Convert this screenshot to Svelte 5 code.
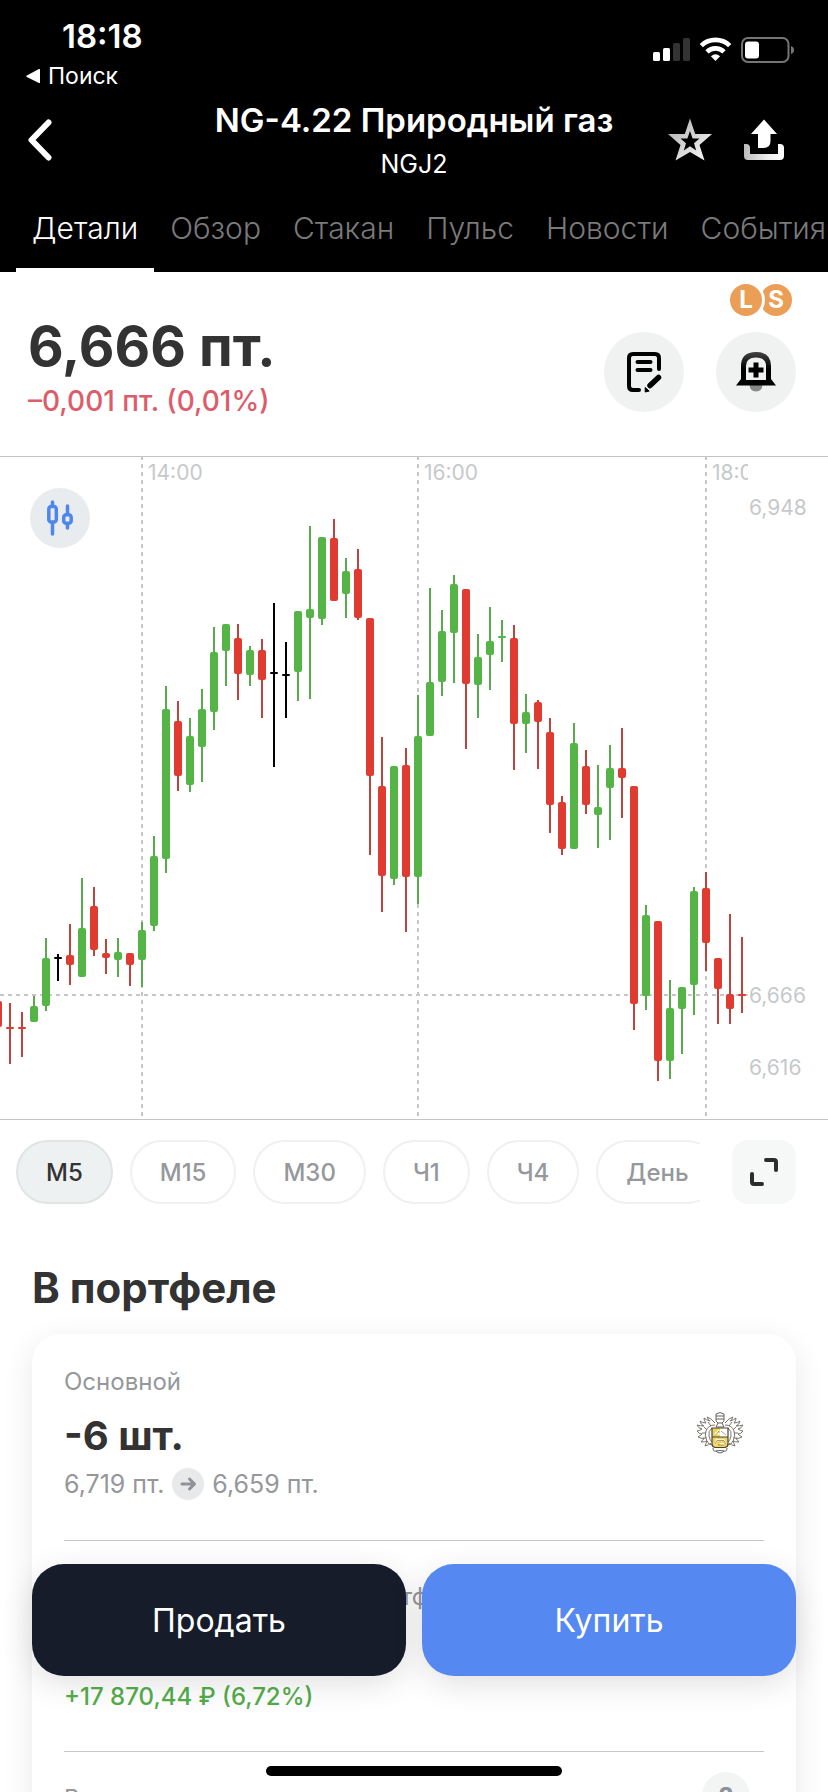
<script>
  let activeTab = "Детали";
  let activeFrame = "М5";

  const tabs = ["Детали", "Обзор", "Стакан", "Пульс", "Новости", "События"];
  const frames = ["М5", "М15", "М30", "Ч1", "Ч4", "День"];

  const timeMarks = [
    { x: 142, label: "14:00" },
    { x: 418, label: "16:00" },
    { x: 706, label: "18:00" }
  ];
  const priceMarks = [
    { y: 515, label: "6,948" },
    { y: 1003, label: "6,666" },
    { y: 1075, label: "6,616" }
  ];

  // kind, high, body top, body bottom, low
  const raw = [
    ["down", 1001, 1001, 1027, 1027], ["down", 1003, 1027, 1029, 1064], ["down", 1012, 1027, 1029, 1057],
    ["up", 996, 1006, 1022, 1022], ["up", 938, 958, 1006, 1011], ["flat", 954, 957, 959, 981],
    ["down", 924, 955, 965, 985], ["up", 878, 928, 977, 977], ["down", 887, 906, 950, 956],
    ["down", 939, 953, 958, 974], ["up", 938, 952, 960, 977], ["down", 953, 953, 965, 986],
    ["up", 922, 930, 960, 987], ["up", 836, 856, 926, 931], ["up", 686, 709, 859, 873],
    ["down", 701, 721, 776, 791], ["up", 718, 736, 785, 792], ["up", 689, 709, 747, 782],
    ["up", 627, 652, 712, 730], ["up", 624, 624, 651, 686], ["down", 624, 638, 674, 700],
    ["up", 646, 650, 675, 686], ["down", 639, 650, 680, 718], ["flat", 603, 672, 674, 767],
    ["flat", 642, 674, 676, 718], ["up", 611, 611, 672, 701], ["up", 526, 609, 618, 699],
    ["up", 537, 537, 619, 625], ["down", 519, 538, 601, 601], ["up", 558, 571, 594, 618],
    ["down", 549, 569, 618, 620], ["down", 618, 618, 776, 855], ["down", 737, 786, 876, 912],
    ["up", 766, 766, 879, 885], ["down", 748, 765, 877, 932], ["up", 695, 736, 877, 904],
    ["up", 588, 682, 736, 736], ["up", 610, 631, 682, 696], ["up", 575, 584, 633, 683],
    ["down", 589, 589, 684, 749], ["up", 634, 657, 685, 718], ["up", 607, 641, 655, 690],
    ["up", 620, 636, 638, 662], ["down", 625, 638, 724, 770], ["up", 694, 712, 724, 753],
    ["down", 700, 702, 722, 769], ["down", 718, 732, 805, 833], ["down", 796, 802, 849, 855],
    ["up", 723, 743, 849, 849], ["down", 750, 766, 805, 814], ["up", 765, 807, 815, 848],
    ["up", 745, 768, 788, 840], ["down", 728, 768, 778, 818], ["down", 786, 786, 1004, 1030],
    ["up", 905, 915, 996, 1010], ["down", 921, 921, 1061, 1081], ["up", 980, 1008, 1061, 1079],
    ["up", 987, 987, 1009, 1054], ["up", 887, 891, 985, 1015], ["down", 872, 888, 943, 971],
    ["down", 958, 958, 989, 1024], ["down", 914, 994, 1009, 1024], ["down", 937, 994, 996, 1013]
  ];
  const candles = raw.map(([kind, high, top, bottom, low], i) => ({
    x: i * 12 - 2, kind, high, top, bottom, low
  }));
</script>

<div class="screen">
  <header class="header">
    <div class="status">
      <div>
        <div class="clock">18:18</div>
        <a class="return" href="#search">
          <svg width="14" height="16" viewBox="0 0 14 16" aria-hidden="true"><path d="M14 1.5v13q0 .8-1 .5L.8 9q-1-.8 0-1.500L13 1q1-.3 1 .5z" fill="#fff" /></svg>
          Поиск
        </a>
      </div>
      <svg class="indicators" width="142" height="26" viewBox="0 0 142 26" aria-hidden="true">
        <g fill="#fff">
          <rect x="0" y="15" width="7" height="9" rx="1.500" />
          <rect x="10" y="11" width="7" height="13" rx="1.500" />
        </g>
        <g fill="#333">
          <rect x="20" y="6" width="7" height="18" rx="1.500" />
          <rect x="30" y="1" width="7" height="23" rx="1.500" />
        </g>
        <g fill="none" stroke="#fff" stroke-width="4.600">
          <path d="M48.300 8.600a20.500 20.500 0 0 1 28.400 0" />
          <path d="M54 14.800a12.300 12.300 0 0 1 17 0" />
        </g>
        <path d="M62.500 24l-4.600-4.800q4.600-3.700 9.200 0z" fill="#fff" />
        <rect x="89" y="1" width="46.500" height="24" rx="6" fill="none" stroke="#757575" stroke-width="2" />
        <rect x="92" y="4.500" width="14" height="17" rx="3" fill="#fff" />
        <path d="M138 9q3 1 3 4t-3 4z" fill="#757575" />
      </svg>
    </div>

    <div class="nav">
      <button class="icon-btn" aria-label="Назад">
        <svg width="26" height="42" viewBox="0 0 26 42"><path d="M20.500 3.500L3.500 21l17 17.500" fill="none" stroke="#fff" stroke-width="6" stroke-linecap="round" stroke-linejoin="round" /></svg>
      </button>
      <div class="heading">
        <h1>NG-4.22 Природный газ</h1>
        <p>NGJ2</p>
      </div>
      <div class="nav-actions">
        <button class="icon-btn" aria-label="В избранное">
          <svg width="44" height="44" viewBox="0 0 44 44">
            <defs><linearGradient id="starFill" x1="0" y1="0" x2="1" y2="1"><stop offset="0" stop-color="#aaa" /><stop offset=".6" stop-color="#ddd" /><stop offset="1" stop-color="#fff" /></linearGradient></defs>
            <path fill="url(#starFill)" fill-rule="evenodd" d="M22 .5l5.200 15.500H44L31.500 27l5 15.500L22 34 7.500 42.500l5-15.500L0 16h16.800zM22 13l-2.600 7.600H12.500l5.500 4.600-2.200 7.300L22 28.300l6.200 4.200-2.200-7.300 5.500-4.600h-6.900z" />
          </svg>
        </button>
        <button class="icon-btn" aria-label="Поделиться">
          <svg width="40" height="42" viewBox="0 0 40 42">
            <defs><linearGradient id="trayFill"><stop offset="0" stop-color="#bbb" /><stop offset=".6" stop-color="#eee" /><stop offset="1" stop-color="#fff" /></linearGradient></defs>
            <path d="M20 .5l13 14.500h-6.500v7q0 7-7 7h-5.500V15H7z" fill="#fff" />
            <path d="M0 25h2q4 0 4 4v6h28V25h2q4 0 4 4v8q0 4-4 4H4q-4 0-4-4z" fill="url(#trayFill)" />
          </svg>
        </button>
      </div>
    </div>

    <nav class="tabs">
      {#each tabs as tab}
        <button class="tab" class:active={tab === activeTab} on:click={() => (activeTab = tab)}>{tab}</button>
      {/each}
    </nav>
  </header>

  <section class="summary">
    <div class="quote">
      <div class="price">6,666 пт.</div>
      <div class="change">–0,001 пт. (0,01%)</div>
    </div>
    <div class="summary-side">
      <div class="badges"><span class="badge long">L</span><span class="badge">S</span></div>
      <div class="round-actions">
        <button class="round" aria-label="Заметка">
          <svg width="36" height="42" viewBox="-1 -1 36 42">
            <g fill="none" stroke="#000" stroke-width="4" stroke-linecap="round">
              <path d="M32 17V6q0-4-4-4H6Q2 2 2 6v28q0 4 4 4h6" />
              <path d="M10.500 10h13M10.500 18h13" />
            </g>
            <path d="M23 33.500l8.500-8" stroke="#000" stroke-width="5.500" stroke-linecap="round" />
            <path d="M18.200 40v-4.500l4 3.500z" fill="#000" stroke="#000" />
          </svg>
        </button>
        <button class="round" aria-label="Добавить уведомление">
          <svg width="40" height="40" viewBox="0 0 40 40">
            <defs><linearGradient id="bellFill" x1="0" y1="0" x2="0" y2="1"><stop offset="0" stop-color="#444" /><stop offset=".5" stop-color="#000" /></linearGradient></defs>
            <path d="M13.500 33h13q-.5 6.500-6.500 6.500T13.500 33z" fill="#888" />
            <path fill="url(#bellFill)" fill-rule="evenodd" d="M5 14Q5 0 20 0t15 14v13l5 6.500H0L5 27zM10 28h20V14q0-8.500-10-8.500T10 14z" />
            <path d="M20 10.500v15M12.500 18h15" stroke="#000" stroke-width="5" />
          </svg>
        </button>
      </div>
    </div>
  </section>

  <section class="chart">
    <svg class="plot" viewBox="0 456 828 664" role="img" aria-label="График цены">
      <defs><clipPath id="plotArea"><rect x="0" y="456" width="748" height="664" /></clipPath></defs>
      <path class="edge" d="M0 456.500H828M0 1119.500H828" />
      {#each timeMarks as mark}
        <line class="grid" x1={mark.x} x2={mark.x} y1="456" y2="1116" />
        <text class="mark" x={mark.x + 6} y="480" clip-path="url(#plotArea)">{mark.label}</text>
      {/each}
      <line class="grid" x1="0" x2="748" y1="995" y2="995" />
      {#each candles as c}
        <g class={c.kind}>
          <line x1={c.x} x2={c.x} y1={c.high} y2={c.low} />
          <rect x={c.x - 4} y={c.top} width="8" height={c.bottom - c.top} rx={c.bottom - c.top > 4 ? 2 : 1} />
        </g>
      {/each}
      {#each priceMarks as mark}
        <text class="mark" x="749" y={mark.y}>{mark.label}</text>
      {/each}
    </svg>
    <button class="chart-type" aria-label="Тип графика">
      <svg width="26" height="36" viewBox="0 0 26 36" fill="none" stroke="#4f86ec" stroke-width="3.500" stroke-linecap="round">
        <rect x="1.800" y="6.500" width="7.500" height="15.500" rx="2.500" />
        <path d="M5.500 2v4M5.500 23v11" />
        <rect x="16.700" y="14.700" width="7.500" height="8.500" rx="2.500" />
        <path d="M20.500 6v8M20.500 24v4" />
      </svg>
    </button>
  </section>

  <div class="frames-row">
    <div class="frames">
      {#each frames as frame}
        <button class="frame" class:active={frame === activeFrame} on:click={() => (activeFrame = frame)}>{frame}</button>
      {/each}
    </div>
    <button class="expand" aria-label="На весь экран">
      <svg width="28" height="28" viewBox="0 0 28 28" fill="none" stroke="#2b2d2e" stroke-width="4" stroke-linecap="round">
        <path d="M16 2h8q2 0 2 2v8M2 16v8q0 2 2 2h8" />
      </svg>
    </button>
  </div>

  <h2>В портфеле</h2>

  <div class="card">
    <div class="row position">
      <div>
        <div class="label">Основной</div>
        <div class="amount">-6 шт.</div>
        <div class="prices">
          <span>6,719 пт.</span>
          <svg width="32" height="32" viewBox="0 0 32 32" aria-hidden="true">
            <circle cx="16" cy="16" r="16" fill="#e7e9eb" />
            <path d="M10 16h12M17.500 11l5 5-5 5" fill="none" stroke="#8f9296" stroke-width="3" stroke-linecap="round" stroke-linejoin="round" />
          </svg>
          <span>6,659 пт.</span>
        </div>
      </div>
      <svg class="emblem" width="48" height="44" viewBox="0 0 48 44" aria-hidden="true">
        <g fill="none" stroke="#6b6860" stroke-width=".9" stroke-linejoin="round">
          <path d="M19 12q-4-5-8-6 1 3 3 4-4-1-6-3 0 3 2 5-4 0-6-2 1 4 4 5-4 0-7-1 2 4 5 4-3 2-5 2 2 3 5 3-2 2-4 3 3 2 6 1-1 2-3 4 4 0 6-1-1 3-2 5 4-1 6-3" />
          <path d="M19 14q-7 0-9 6t1 10q2 4 5 4M16 17q-4 3-3 8t3 6M8 16l3 3M6 22h4M7 28l4-2M12 11l3 4" />
        </g>
        <g fill="none" stroke="#6b6860" stroke-width=".9" stroke-linejoin="round" transform="translate(48 0) scale(-1 1)">
          <path d="M19 12q-4-5-8-6 1 3 3 4-4-1-6-3 0 3 2 5-4 0-6-2 1 4 4 5-4 0-7-1 2 4 5 4-3 2-5 2 2 3 5 3-2 2-4 3 3 2 6 1-1 2-3 4 4 0 6-1-1 3-2 5 4-1 6-3" />
          <path d="M19 14q-7 0-9 6t1 10q2 4 5 4M16 17q-4 3-3 8t3 6M8 16l3 3M6 22h4M7 28l4-2M12 11l3 4" />
        </g>
        <path d="M20 3q4-3 8 0v7l-2 2 2 4h-8l2-4-2-2zM20 5h8M20 8h8M22 12h4M17 37q0 4 3 3 4 4 8 0 3 1 3-3M20 40q4-1 8 0" fill="#fff" stroke="#55524b" stroke-width=".9" />
        <path d="M16 17h16v16q0 3-3 3.500H19q-3-.5-3-3.500z" fill="#f1d35a" />
        <path d="M24 17h8v9h-8z" fill="#fff" />
        <path d="M16 17h16v16q0 3-3 3.500H19q-3-.5-3-3.500zM16 26h16" fill="none" stroke="#4a4435" stroke-width="1.200" />
        <path d="M19 24l4-5M19 22l5 1M19 34l2-5h7l2 4M20 28l2 2M24 33h4" fill="none" stroke="#fff" stroke-width="1.500" />
        <path d="M19 24.500l4-4.500M25 20l5 4M19 33.500l2-4h7l2 4M22 34h6" fill="none" stroke="#6d6341" stroke-width=".6" />
      </svg>
    </div>
    <div class="row income">
      <div class="label">Прибыль за все время в портфеле</div>
      <div class="profit">+17 870,44 ₽ (6,72%)</div>
    </div>
    <div class="row margin">
      <div class="label">Вариационная маржа</div>
      <button class="help" aria-label="Подсказка">?</button>
    </div>
  </div>

  <div class="actions">
    <button class="sell">Продать</button>
    <button class="buy">Купить</button>
  </div>
  <div class="home"></div>
</div>

<style>
  :global(body) {
    margin: 0;
    background: #fff;
  }

  .screen {
    position: relative;
    height: 100vh;
    overflow: hidden;
    font-family: Inter, "Liberation Sans", sans-serif;
    color: #333;
  }
  button {
    font: inherit;
    margin: 0;
    padding: 0;
    border: none;
    background: none;
    color: inherit;
    cursor: pointer;
  }
  svg {
    display: block;
    flex-shrink: 0;
  }

  /* Header */
  .header {
    background: #000;
    color: #fff;
  }
  .status {
    display: flex;
    justify-content: space-between;
    padding: 16px 33px 0 26px;
  }
  .clock {
    padding-left: 36px;
    font-size: 33px;
    line-height: 40px;
    font-weight: 600;
  }
  .return {
    display: flex;
    align-items: center;
    gap: 8px;
    margin-top: 8px;
    font-size: 23px;
    line-height: 24px;
    color: #fff;
    text-decoration: none;
  }
  .indicators {
    margin-top: 21px;
  }
  .nav {
    display: grid;
    grid-template-columns: 1fr auto 1fr;
    align-items: center;
    padding: 12px 28px 0;
  }
  .icon-btn {
    justify-self: start;
  }
  .heading {
    text-align: center;
  }
  h1 {
    margin: 0;
    font-size: 33px;
    line-height: 40px;
    font-weight: 600;
  }
  .heading p {
    margin: 8px 0 0;
    font-size: 25px;
    line-height: 32px;
  }
  .nav-actions {
    display: flex;
    justify-content: flex-end;
    gap: 32px;
    padding-right: 16px;
  }
  .tabs {
    display: flex;
    padding-left: 16px;
    overflow: hidden;
  }
  .tab {
    flex-shrink: 0;
    padding: 30px 16px 22px;
    border-bottom: 4px solid transparent;
    font-size: 30px;
    line-height: 36px;
    font-weight: 300;
    color: #7a7a7a;
  }
  .tab.active {
    color: #fff;
    border-color: #fff;
  }

  /* Quote */
  .summary {
    display: flex;
    justify-content: space-between;
    padding: 12px 32px 38px 28px;
  }
  .quote {
    padding-top: 30px;
  }
  .price {
    font-size: 55px;
    line-height: 64px;
    font-weight: 700;
  }
  .change {
    margin-top: 6px;
    font-size: 28px;
    line-height: 34px;
    font-weight: 500;
    color: #de5c69;
  }
  .summary-side {
    display: flex;
    flex-direction: column;
    align-items: flex-end;
    gap: 16px;
  }
  .badges {
    display: flex;
    padding-right: 4px;
  }
  .badge {
    width: 32px;
    height: 32px;
    border-radius: 50%;
    background: #eb9f56;
    color: #fff;
    font-size: 24px;
    line-height: 32px;
    font-weight: 700;
    text-align: center;
  }
  .badge.long {
    position: relative;
    margin-right: -2px;
    box-shadow: 0 0 0 3px #fff;
  }
  .round-actions {
    display: flex;
    gap: 32px;
  }
  .round {
    display: grid;
    place-items: center;
    width: 80px;
    height: 80px;
    border-radius: 50%;
    background: #f0f2f2;
  }

  /* Chart */
  .chart {
    position: relative;
  }
  .plot {
    width: 100%;
    height: auto;
  }
  .edge {
    stroke: #c4c4c4;
  }
  .grid {
    stroke: #c6c6c6;
    stroke-width: 2;
    stroke-dasharray: 4 4;
  }
  .mark {
    font-size: 21px;
    fill: #c6c9cb;
  }
  .up line {
    stroke: #5aab4d;
    stroke-width: 2;
  }
  .up rect {
    fill: #54b546;
  }
  .down line {
    stroke: #bb453c;
    stroke-width: 2;
  }
  .down rect {
    fill: #df3b31;
  }
  .flat line {
    stroke: #000;
    stroke-width: 2;
  }
  .chart-type {
    position: absolute;
    top: 32px;
    left: 30px;
    display: grid;
    place-items: center;
    width: 60px;
    height: 60px;
    border-radius: 50%;
    background: #e9ecee;
  }

  /* Timeframes */
  .frames-row {
    display: flex;
    gap: 32px;
    padding: 20px 32px 0 16px;
  }
  .frames {
    display: flex;
    flex: 1;
    gap: 17px;
    min-width: 0;
    overflow: hidden;
  }
  .frame {
    flex-shrink: 0;
    box-sizing: border-box;
    height: 64px;
    padding: 0 28px;
    border: 2px solid #eff0f0;
    border-radius: 32px;
    font-size: 24px;
    font-weight: 500;
    color: #96989c;
  }
  .frame.active {
    background: #eef1f1;
    border-color: #e2e4e4;
    color: #333;
  }
  .expand {
    display: grid;
    place-items: center;
    width: 64px;
    height: 64px;
    border-radius: 16px;
    background: #f6f8f8;
  }

  /* Portfolio */
  h2 {
    margin: 60px 32px 22px;
    font-size: 42px;
    line-height: 48px;
    font-weight: 700;
  }
  .card {
    margin: 0 32px;
    padding: 0 32px;
    border-radius: 28px;
    background: #fff;
    box-shadow: 0 8px 32px rgba(0, 0, 0, 0.09);
  }
  .row {
    border-bottom: 1px solid #c4c6c8;
  }
  .label {
    font-size: 24px;
    line-height: 32px;
    color: #95979b;
  }
  .position {
    display: flex;
    justify-content: space-between;
    align-items: center;
    padding: 32px 0 40px;
  }
  .amount {
    margin: 14px 0 8px;
    font-size: 40px;
    line-height: 48px;
    font-weight: 700;
  }
  .prices {
    display: flex;
    gap: 8px;
    font-size: 25px;
    line-height: 32px;
    color: #95979b;
  }
  .emblem {
    margin-right: 20px;
  }
  .income {
    padding: 40px 0 38px;
  }
  .profit {
    margin-top: 68px;
    font-size: 24px;
    line-height: 32px;
    font-weight: 500;
    color: #54ac4b;
  }
  .margin {
    display: flex;
    justify-content: space-between;
    align-items: center;
    padding: 20px 14px 40px 0;
  }
  .margin .label {
    padding-top: 6px;
  }
  .help {
    width: 48px;
    height: 48px;
    border-radius: 50%;
    background: #f3f5f5;
    color: #8d9096;
    font-size: 26px;
    font-weight: 700;
  }

  /* Bottom bar */
  .actions {
    position: absolute;
    right: 32px;
    bottom: 116px;
    left: 32px;
    display: flex;
    gap: 16px;
  }
  .actions button {
    flex: 1;
    height: 112px;
    border-radius: 32px;
    font-size: 32px;
    color: #fff;
    box-shadow: 0 8px 32px rgba(0, 0, 0, 0.12);
  }
  .actions .sell {
    background: #161c2a;
  }
  .actions .buy {
    background: #5588f0;
  }
  .home {
    position: absolute;
    bottom: 16px;
    left: 50%;
    width: 296px;
    height: 10px;
    margin-left: -148px;
    border-radius: 5px;
    background: #000;
  }
</style>
